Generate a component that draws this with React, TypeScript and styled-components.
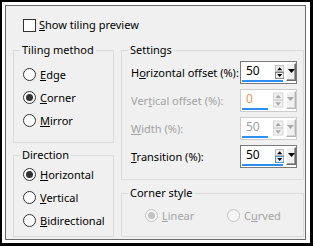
import styled, { createGlobalStyle } from "styled-components";

const GlobalStyle = createGlobalStyle`
  html, body {
    margin: 0;
    padding: 0;
    background: #fff;
  }
  body {
    font-family: "Noto Sans", "Liberation Sans", sans-serif;
    font-size: 11px;
    color: #000;
  }
  u {
    text-underline-offset: 1px;
  }
`;

const Frame = styled.div`
  width: 313px;
  height: 246px;
  box-sizing: border-box;
  border: 2px solid #000;
  border-right-width: 3px;
  border-bottom-width: 3px;
  padding: 3px 4px 3px 3px;
  background: #fff;
`;

const Panel = styled.div`
  height: 100%;
  box-sizing: border-box;
  border: 1px solid #6a6a6a;
  background: #f0f0f0;
  padding: 11px 0 0 7px;
  display: flex;
  flex-direction: column;
`;

const CheckRow = styled.label`
  display: flex;
  align-items: center;
  gap: 3px;
  height: 16px;
  margin-left: 10px;
`;

const CheckBox = styled.span`
  width: 13px;
  height: 13px;
  box-sizing: border-box;
  border: 1px solid #333;
  background: #fff;
`;

const Columns = styled.div`
  display: flex;
  gap: 7px;
  margin-top: 9px;
`;

const Column = styled.div<{ $w: number; $gap: number }>`
  width: ${(p) => p.$w}px;
  display: flex;
  flex-direction: column;
  gap: ${(p) => p.$gap}px;
`;

const Group = styled.fieldset<{ $h: number; $top: number }>`
  margin: 0;
  padding: ${(p) => p.$top}px 0 0 0;
  height: ${(p) => p.$h}px;
  box-sizing: border-box;
  border: 1px solid #dcdcdc;
  min-width: 0;
`;

const Title = styled.legend`
  margin-left: 6px;
  padding: 0 2px;
  line-height: 16px;
  height: 16px;
`;

const RadioRow = styled.div<{ $indent?: number }>`
  display: flex;
  align-items: center;
  gap: 4px;
  height: 23px;
  margin-left: ${(p) => p.$indent ?? 9}px;
`;

const RadioCircle = styled.span<{ $off?: boolean }>`
  width: 13px;
  height: 13px;
  box-sizing: border-box;
  border-radius: 50%;
  border: 1px solid ${(p) => (p.$off ? "#c4c4c4" : "#333")};
  background: ${(p) => (p.$off ? "#f4f4f4" : "#fff")};
  display: flex;
  align-items: center;
  justify-content: center;
  flex: none;
`;

const RadioDot = styled.span<{ $off?: boolean }>`
  width: 7px;
  height: 7px;
  border-radius: 50%;
  background: ${(p) => (p.$off ? "#c4c4c4" : "#333")};
`;

const Label = styled.span<{ $off?: boolean }>`
  color: ${(p) => (p.$off ? "#a3a3a3" : "#000")};
  white-space: nowrap;
  line-height: 16px;
`;

const Fields = styled.div`
  display: flex;
  flex-direction: column;
  gap: 5px;
  padding: 3px 6px 0 9px;
`;

const FieldRow = styled.div`
  display: flex;
  align-items: center;
  justify-content: space-between;
  height: 23px;
`;

const Spin = styled.div<{ $off?: boolean }>`
  width: 57px;
  height: 23px;
  box-sizing: border-box;
  border: 1px solid ${(p) => (p.$off ? "#cccccc" : "#7a7a7a")};
  background: #fff;
  display: flex;
  padding: 1px 0 0 1px;
  gap: 1px;
`;

const ValueField = styled.div`
  width: 31px;
  display: flex;
  flex-direction: column;
`;

const ValueText = styled.span<{ $color: string }>`
  color: ${(p) => p.$color};
  font-size: 12px;
  line-height: 16px;
  padding-left: 4px;
  height: 17px;
`;

const Bar = styled.span<{ $w: number }>`
  height: 2px;
  width: ${(p) => p.$w}px;
  background: #2e8ff0;
`;

const DropButton = styled.div<{ $off?: boolean }>`
  width: 11px;
  height: 18px;
  margin-left: 1px;
  box-sizing: border-box;
  background: #f0f0f0;
  border-top: 1px solid #fff;
  border-left: 1px solid #fff;
  border-right: 1px solid ${(p) => (p.$off ? "#b4b4b4" : "#6a6a6a")};
  border-bottom: 1px solid ${(p) => (p.$off ? "#b4b4b4" : "#6a6a6a")};
  box-shadow: inset -1px -1px 0 ${(p) => (p.$off ? "#d8d8d8" : "#a0a0a0")};
  display: flex;
  justify-content: center;
  padding-top: 5px;
`;

const Options = styled.div`
  display: flex;
  padding: 3px 0 0 23px;
`;

const Option = styled.div<{ $w: number }>`
  width: ${(p) => p.$w}px;
  display: flex;
  align-items: center;
  gap: 4px;
  height: 23px;
`;

const Mnemonic = ({ text, at }: { text: string; at: number }) => (
  <>
    {text.slice(0, at)}
    <u>{text[at]}</u>
    {text.slice(at + 1)}
  </>
);

const Arrows = ({ off, hot }: { off?: boolean; hot?: boolean }) => {
  const ink = off ? "#a8a8a8" : "#000";
  const edge = off ? "#d6d6d6" : "#adadad";
  return (
    <svg width="11" height="16" viewBox="0 0 11 16" style={{ marginTop: 1, marginLeft: 1 }}>
      <rect x="0.5" y="0.5" width="10" height="7" fill="#f0f0f0" stroke={edge} />
      <rect
        x="0.5"
        y="8.5"
        width="10"
        height="7"
        fill={hot ? "#e5f1fb" : "#f0f0f0"}
        stroke={hot ? "#3c7fb1" : off ? edge : "#707070"}
      />
      <path d="M2.5 6 L5.5 2.5 L8.5 6 Z" fill={ink} />
      <path d="M2.5 10.5 L8.5 10.5 L5.5 14 Z" fill={ink} />
    </svg>
  );
};

const DownTri = ({ off }: { off?: boolean }) => (
  <svg width="7" height="4" viewBox="0 0 7 4">
    <path d="M0 0 L7 0 L3.5 4 Z" fill={off ? "#a8a8a8" : "#000"} />
  </svg>
);

const Radio = ({ checked, off }: { checked?: boolean; off?: boolean }) => (
  <RadioCircle $off={off}>{checked && <RadioDot $off={off} />}</RadioCircle>
);

const settings = [
  { text: "Horizontal offset (%):", key: 1, value: "50", color: "#000", bar: 41, off: false, hot: false },
  { text: "Vertical offset (%):", key: 3, value: "0", color: "#e39a5e", bar: 26, off: true, hot: false },
  { text: "Width (%):", key: 0, value: "50", color: "#9d9d9d", bar: 26, off: true, hot: false },
  { text: "Transition (%):", key: 0, value: "50", color: "#000", bar: 41, off: false, hot: true },
];

export default function App() {
  return (
    <>
      <GlobalStyle />
      <Frame>
        <Panel>
          <CheckRow>
            <CheckBox />
            <Label>
              <Mnemonic text="Show tiling preview" at={0} />
            </Label>
          </CheckRow>
          <Columns>
            <Column $w={101} $gap={4}>
              <Group $h={101} $top={5}>
                <Title>Tiling method</Title>
                <RadioRow>
                  <Radio />
                  <Label>
                    <Mnemonic text="Edge" at={0} />
                  </Label>
                </RadioRow>
                <RadioRow>
                  <Radio checked />
                  <Label>
                    <Mnemonic text="Corner" at={0} />
                  </Label>
                </RadioRow>
                <RadioRow>
                  <Radio />
                  <Label>
                    <Mnemonic text="Mirror" at={0} />
                  </Label>
                </RadioRow>
              </Group>
              <Group $h={90} $top={0}>
                <Title>Direction</Title>
                <RadioRow>
                  <Radio checked />
                  <Label>
                    <Mnemonic text="Horizontal" at={0} />
                  </Label>
                </RadioRow>
                <RadioRow>
                  <Radio />
                  <Label>
                    <Mnemonic text="Vertical" at={0} />
                  </Label>
                </RadioRow>
                <RadioRow>
                  <Radio />
                  <Label>
                    <Mnemonic text="Bidirectional" at={0} />
                  </Label>
                </RadioRow>
              </Group>
            </Column>
            <Column $w={183} $gap={5}>
              <Group $h={138} $top={0}>
                <Title>Settings</Title>
                <Fields>
                  {settings.map((s) => (
                    <FieldRow key={s.text}>
                      <Label $off={s.off}>
                        <Mnemonic text={s.text} at={s.key} />
                      </Label>
                      <Spin $off={s.off}>
                        <ValueField>
                          <ValueText $color={s.color}>{s.value}</ValueText>
                          <Bar $w={s.bar} />
                        </ValueField>
                        <Arrows off={s.off} hot={s.hot} />
                        <DropButton $off={s.off}>
                          <DownTri off={s.off} />
                        </DropButton>
                      </Spin>
                    </FieldRow>
                  ))}
                </Fields>
              </Group>
              <Group $h={52} $top={0}>
                <Title>Corner style</Title>
                <Options>
                  <Option $w={82}>
                    <Radio checked off />
                    <Label $off>
                      <Mnemonic text="Linear" at={0} />
                    </Label>
                  </Option>
                  <Option $w={60}>
                    <Radio off />
                    <Label $off>
                      <Mnemonic text="Curved" at={1} />
                    </Label>
                  </Option>
                </Options>
              </Group>
            </Column>
          </Columns>
        </Panel>
      </Frame>
    </>
  );
}
